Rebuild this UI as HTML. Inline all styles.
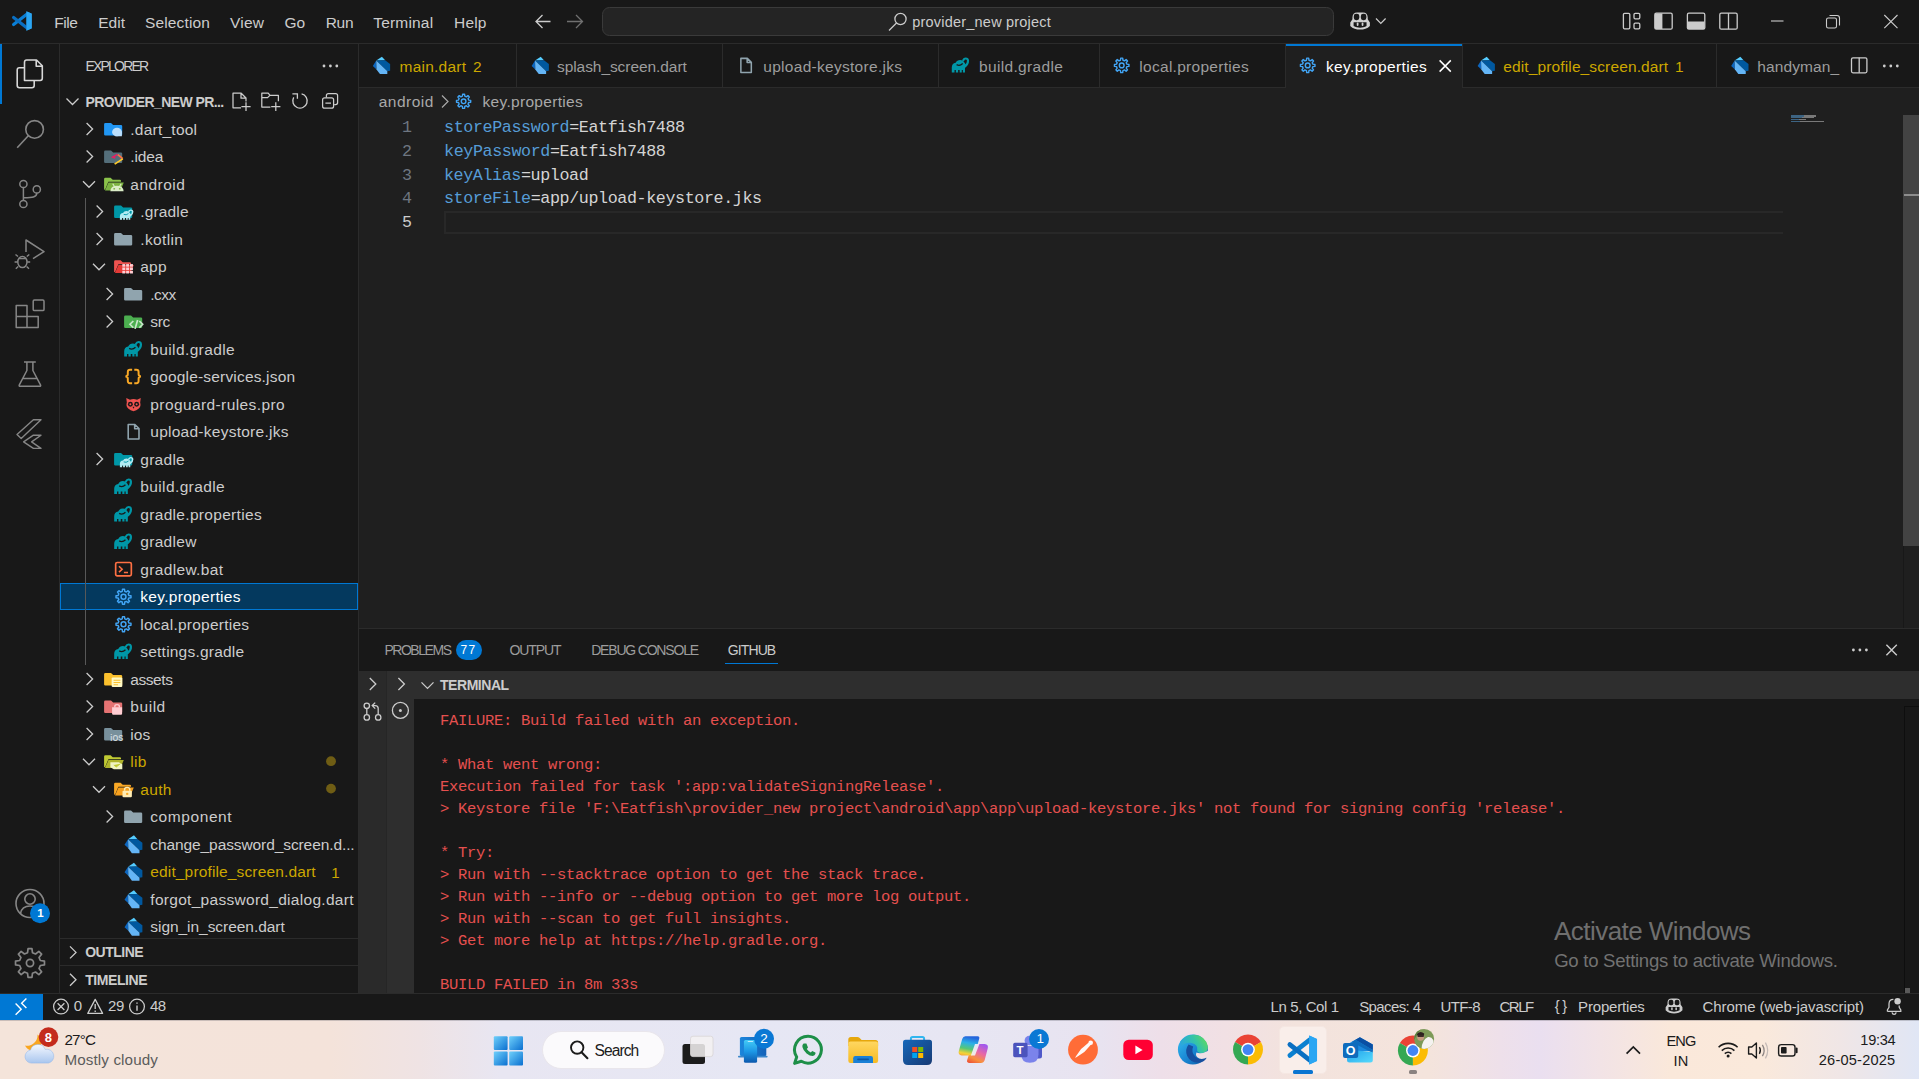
<!DOCTYPE html>
<html><head><meta charset="utf-8"><title>key.properties - provider_new project - Visual Studio Code</title>
<style>
html,body{margin:0;padding:0;background:#181818;}
body{width:1919px;height:1079px;position:relative;overflow:hidden;font-family:"Liberation Sans", sans-serif;}
#r div{position:absolute;box-sizing:border-box;}
#r span{position:absolute;white-space:pre;}
#r svg{position:absolute;left:0;top:0;}
#r span.m{font-family:"Liberation Mono", monospace;}
</style></head><body><div id="r">
<div style="left:0px;top:0px;width:1919px;height:1020px;background:#181818;"></div>
<div style="left:0px;top:43px;width:1919px;height:1px;background:#2b2b2b;"></div>
<div style="left:602px;top:7px;width:731.5px;height:28.5px;background:#242424;border:1px solid #3a3a3a;border-radius:7.5px;"></div>
<div style="left:59px;top:44px;width:1px;height:949px;background:#2b2b2b;"></div>
<div style="left:0px;top:44px;width:2px;height:60px;background:#0078d4;"></div>
<div style="left:358px;top:44px;width:1px;height:949px;background:#2b2b2b;"></div>
<div style="left:359px;top:44px;width:1560px;height:584px;background:#1f1f1f;"></div>
<div style="left:359px;top:44px;width:1560px;height:43px;background:#181818;"></div>
<div style="left:359px;top:87px;width:1560px;height:1px;background:#2b2b2b;"></div>
<div style="left:516px;top:44px;width:1px;height:43px;background:#2b2b2b;"></div>
<div style="left:722px;top:44px;width:1px;height:43px;background:#2b2b2b;"></div>
<div style="left:938px;top:44px;width:1px;height:43px;background:#2b2b2b;"></div>
<div style="left:1099px;top:44px;width:1px;height:43px;background:#2b2b2b;"></div>
<div style="left:1285px;top:44px;width:1px;height:43px;background:#2b2b2b;"></div>
<div style="left:1462px;top:44px;width:1px;height:43px;background:#2b2b2b;"></div>
<div style="left:1716px;top:44px;width:1px;height:43px;background:#2b2b2b;"></div>
<div style="left:1846px;top:44px;width:1px;height:43px;background:#2b2b2b;"></div>
<div style="left:1286px;top:44px;width:176px;height:44px;background:#1f1f1f;"></div>
<div style="left:1286px;top:44px;width:176px;height:1.5px;background:#0078d4;"></div>
<div style="left:1843px;top:44px;width:76px;height:43px;background:#181818;"></div>
<div style="left:444px;top:210.5px;width:1339px;height:23.75px;background:transparent;border:2px solid #282828;border-right:none;"></div>
<div style="left:1903px;top:115.25px;width:1px;height:512.75px;background:#181818;"></div>
<div style="left:1903px;top:115.25px;width:16px;height:431px;background:#434343;"></div>
<div style="left:1904px;top:194.2px;width:15px;height:2px;background:#8c8c8c;"></div>
<div style="left:359px;top:628px;width:1560px;height:1px;background:#2b2b2b;"></div>
<div style="left:359px;top:629px;width:1560px;height:364px;background:#181818;"></div>
<div style="left:359px;top:671px;width:27.5px;height:322px;background:#2a2a2a;"></div>
<div style="left:386.5px;top:671px;width:27.5px;height:322px;background:#2e2e2e;"></div>
<div style="left:386px;top:671px;width:1px;height:322px;background:#262626;"></div>
<div style="left:414px;top:671px;width:1505px;height:27.75px;background:#2e2e2e;"></div>
<div style="left:724.5px;top:662.8px;width:53.5px;height:1.25px;background:#0078d4;"></div>
<div style="left:456px;top:640px;width:26px;height:20px;background:#0078d4;border-radius:10px;"></div>
<div style="left:1904px;top:706px;width:1px;height:287px;background:#0e0e0e;"></div>
<div style="left:1905px;top:988px;width:5px;height:5px;background:#5a5a5a;"></div>
<div style="left:1904px;top:706px;width:15px;height:1px;background:#0e0e0e;"></div>
<div style="left:0px;top:993px;width:1919px;height:1px;background:#2b2b2b;"></div>
<div style="left:0px;top:994px;width:43px;height:26px;background:#0078d4;"></div>
<div style="left:60px;top:938px;width:298px;height:1px;background:#2b2b2b;"></div>
<div style="left:60px;top:965px;width:298px;height:1px;background:#2b2b2b;"></div>
<div style="left:60px;top:582.75px;width:298px;height:27.5px;background:#04395e;border:1px solid #0078d4;"></div>
<div style="left:85px;top:197.75px;width:1px;height:467.5px;background:#585858;"></div>
<div style="left:1790.8px;top:115.0px;width:13.0px;height:1.5px;background:rgba(86,156,214,0.55);"></div>
<div style="left:1803.8px;top:115.0px;width:12.0px;height:1.5px;background:rgba(212,212,212,0.5);"></div>
<div style="left:1790.8px;top:116.98px;width:11.0px;height:1.5px;background:rgba(86,156,214,0.55);"></div>
<div style="left:1801.8px;top:116.98px;width:12.0px;height:1.5px;background:rgba(212,212,212,0.5);"></div>
<div style="left:1790.8px;top:118.96px;width:8.0px;height:1.5px;background:rgba(86,156,214,0.55);"></div>
<div style="left:1798.8px;top:118.96px;width:7.0px;height:1.5px;background:rgba(212,212,212,0.5);"></div>
<div style="left:1790.8px;top:120.94px;width:9.0px;height:1.5px;background:rgba(86,156,214,0.55);"></div>
<div style="left:1799.8px;top:120.94px;width:24.0px;height:1.5px;background:rgba(212,212,212,0.5);"></div>
<div style="left:0px;top:1020px;width:1919px;height:59px;background:#f1e3dc;background:linear-gradient(90deg,#f4e4da 0px,#f4e3da 330px,#efe3e4 420px,#e8e6f2 500px,#e6e7f4 760px,#e7e6f3 960px,#e8e3f0 1100px,#eedfe9 1160px,#f1e0e4 1225px,#f3e3dd 1295px,#f4e4dc 1430px,#eee0ea 1500px,#eadff0 1540px,#f2e3e6 1600px,#fae8da 1670px,#fae9db 1760px,#f0e6e6 1840px,#e0e6f5 1919px);"></div>
<div style="left:0px;top:1020px;width:1919px;height:1px;background:rgba(90,90,100,0.28);"></div>
<div style="left:542px;top:1030.5px;width:123px;height:38.5px;background:#fbfafc;border-radius:19.25px;border:1px solid #e9e6ec;"></div>
<div style="left:1278.6px;top:1025.8px;width:48.6px;height:48.6px;background:#f9eeea;border-radius:5px;border:1px solid #f5e7e2;"></div>
<div style="left:1293.2px;top:1070.2px;width:19.4px;height:3.5px;background:#0a75d1;border-radius:1.6px;"></div>
<div style="left:1409px;top:1070.3px;width:8px;height:3.4px;background:#8a8280;border-radius:1.6px;"></div>
<svg width="1919" height="1079" viewBox="0 0 1919 1079" fill="none">
<g transform="translate(12.00,11.00) scale(1)" ><path d="M14.6 0.4 L19.6 2.6 V17.4 L14.6 19.6 Z" fill="#2aa5f4" /><path d="M14.8 3.2 L1.6 13.6" stroke="#0a7fd6" stroke-width="3.2" fill="none" stroke-linecap="round"/><path d="M14.8 16.8 L1.6 6.4" stroke="#0a6fc2" stroke-width="3.2" fill="none" stroke-linecap="round"/><path d="M14.4 0.3 L19.7 2.7 V17.3 L14.4 19.7 Z" fill="#2ba6f3" /></g>
<path d="M550.5 21.5H536 M542.5 15L536 21.5L542.5 28" stroke="#cccccc" stroke-width="1.3" fill="none" />
<path d="M567 21.5H582.5 M576 15L582.5 21.5L576 28" stroke="#707070" stroke-width="1.3" fill="none" />
<circle cx="900.5" cy="19" r="5.6" stroke="#cccccc" stroke-width="1.3"/><path d="M896.5 23L889 30.5" stroke="#cccccc" stroke-width="1.3" fill="none" />
<g transform="translate(1349.30,11.20) scale(0.98)" ><path d="M3.2 6.5C3.2 3 5 1.2 8 1.2H14C17 1.2 18.8 3 18.8 6.5V8.2L21 11.5V15C18.5 17.6 14.8 18.8 11 18.8C7.2 18.8 3.5 17.6 1 15V11.5L3.2 8.2Z" fill="#d0d0d0"/><rect x="4.6" y="2.6" width="5.6" height="6.6" rx="2.4" fill="#181818"/><rect x="11.8" y="2.6" width="5.6" height="6.6" rx="2.4" fill="#181818"/><path d="M4.4 11.2H17.6V15.2C15.6 16.3 13.4 16.8 11 16.8C8.6 16.8 6.4 16.3 4.4 15.2Z" fill="#181818"/><rect x="7.6" y="11.6" width="1.8" height="3.4" rx="0.9" fill="#d0d0d0"/><rect x="12.6" y="11.6" width="1.8" height="3.4" rx="0.9" fill="#d0d0d0"/></g>
<path d="M1376 18.5L1380.8 23.3L1385.6 18.5" stroke="#cccccc" stroke-width="1.2" fill="none" />
<rect x="1623.4" y="13.4" width="6.4" height="15.4" rx="1.2" stroke="#cccccc" stroke-width="1.3"/><rect x="1634" y="13.4" width="5.8" height="5.4" rx="1.2" stroke="#cccccc" stroke-width="1.3"/><rect x="1634" y="23.2" width="5.8" height="5.6" rx="1.2" stroke="#cccccc" stroke-width="1.3"/>
<rect x="1654.8" y="13.2" width="17.4" height="16" rx="1.5" stroke="#cccccc" stroke-width="1.3"/><rect x="1655" y="13.4" width="7.4" height="15.6" fill="#cccccc"/>
<rect x="1687.4" y="13.2" width="17.4" height="16" rx="1.5" stroke="#cccccc" stroke-width="1.3"/><rect x="1687.6" y="21.5" width="17" height="7.5" fill="#cccccc"/>
<rect x="1719.8" y="13.2" width="17.4" height="16" rx="1.5" stroke="#cccccc" stroke-width="1.3"/><path d="M1728.5 13.2V29.2" stroke="#cccccc" stroke-width="1.3" fill="none" />
<path d="M1771 21H1783.5" stroke="#cccccc" stroke-width="1.1" fill="none" />
<rect x="1826.5" y="18" width="10" height="10" rx="1.8" stroke="#cccccc" stroke-width="1.1"/><path d="M1829.5 15.5H1837Q1839.5 15.5 1839.5 18V25.5" stroke="#cccccc" stroke-width="1.1" fill="none" />
<path d="M1884.3 15L1897.5 28.2M1897.5 15L1884.3 28.2" stroke="#cccccc" stroke-width="1.1" fill="none" />
<path d="M24.5 80.5V62.2Q24.5 60 26.7 60H36.5L42.3 65.8V78.3Q42.3 80.5 40.1 80.5Z M36.2 60.2V66.2H42.2" stroke="#d7d7d7" stroke-width="1.6" fill="none" stroke-linejoin="round"/><path d="M24.3 67.8H19.4Q17.2 67.8 17.2 70V85.6Q17.2 87.8 19.4 87.8H32Q34.2 87.8 34.2 85.6V80.8" stroke="#d7d7d7" stroke-width="1.6" fill="none" />
<circle cx="34.6" cy="129.4" r="8.8" stroke="#868686" stroke-width="1.6"/><path d="M28.3 135.7L17.2 147.8" stroke="#868686" stroke-width="1.6" fill="none" />
<circle cx="23.4" cy="184" r="3.6" stroke="#868686" stroke-width="1.5"/><circle cx="23.4" cy="204" r="3.6" stroke="#868686" stroke-width="1.5"/><circle cx="36.8" cy="189.4" r="3.6" stroke="#868686" stroke-width="1.5"/><path d="M23.4 187.6V200.4 M36.8 193C36.8 197.5 32 197.6 23.6 197.8" stroke="#868686" stroke-width="1.5" fill="none" />
<path d="M26 252V240L44 251.6L33 258.6" stroke="#868686" stroke-width="1.5" fill="none" stroke-linejoin="round"/><ellipse cx="22.4" cy="262" rx="4.6" ry="5.6" stroke="#868686" stroke-width="1.5"/><path d="M18 256.5L15.5 254.5 M26.8 256.5L29.3 254.5 M17.6 262H14.6 M27.2 262H30.2 M18.2 266.5L15.8 268.8 M26.6 266.5L29 268.8 M19 258.6H25.8" stroke="#868686" stroke-width="1.4" fill="none" />
<path d="M16.2 305.5H27V316.6H38.2V327.4H16.2Z M16.2 316.6H27V327.4" stroke="#868686" stroke-width="1.5" fill="none" stroke-linejoin="round"/><rect x="33.2" y="300" width="10.8" height="10.6" rx="1.2" stroke="#868686" stroke-width="1.5"/>
<path d="M24 362H35.8 M26.9 362V370.5L19.2 385.2Q18.9 386.2 20 386.2H39.8Q40.9 386.2 40.6 385.2L32.9 370.5V362 M22.6 378.6H37.2" stroke="#868686" stroke-width="1.5" fill="none" stroke-linejoin="round"/>
<path d="M33.4 419.8H41L21.2 438.6L17 434.6Z M33.4 435.2H41L31.6 441.9L41 448.4H33.4L23.6 441.9Z" stroke="#868686" stroke-width="1.4" fill="none" stroke-linejoin="round"/>
<circle cx="30" cy="903.5" r="14" stroke="#868686" stroke-width="1.6"/><circle cx="30" cy="899" r="5.2" stroke="#868686" stroke-width="1.6"/><path d="M20.5 913.5C21.5 908 25 906 30 906C35 906 38.5 908 39.5 913.5" stroke="#868686" stroke-width="1.6" fill="none" />
<circle cx="40" cy="913.2" r="10" fill="#0078d4"/>
<path d="M40.31 960.53L44.47 961.06L44.47 964.94L40.31 965.47L39.04 968.54L41.61 971.86L38.86 974.61L35.54 972.04L32.47 973.31L31.94 977.47L28.06 977.47L27.53 973.31L24.46 972.04L21.14 974.61L18.39 971.86L20.96 968.54L19.69 965.47L15.53 964.94L15.53 961.06L19.69 960.53L20.96 957.46L18.39 954.14L21.14 951.39L24.46 953.96L27.53 952.69L28.06 948.53L31.94 948.53L32.47 952.69L35.54 953.96L38.86 951.39L41.61 954.14L39.04 957.46Z" stroke="#868686" stroke-width="1.7" stroke-linejoin="round" fill="none"/><circle cx="30" cy="963" r="3.6" stroke="#868686" stroke-width="1.7"/>
<circle cx="324" cy="66" r="1.4" fill="#cccccc"/><circle cx="330.4" cy="66" r="1.4" fill="#cccccc"/><circle cx="336.8" cy="66" r="1.4" fill="#cccccc"/>
<path d="M66.50 98.50L72.50 104.50L78.50 98.50" stroke="#cccccc" stroke-width="1.3" fill="none" />
<path d="M241 107.8H233V93.2H241.2L246 98V101.5 M241 93.4V98.2H245.8" stroke="#cccccc" stroke-width="1.25" fill="none" stroke-linejoin="round"/><path d="M241.4 106.6H250.6 M246 102.2V111" stroke="#cccccc" stroke-width="1.25" fill="none" />
<path d="M270.4 107H261.8V93.2H268.2L270 95.4H278.4V101.2 M261.8 97.6H267.6L269.6 95.6" stroke="#cccccc" stroke-width="1.25" fill="none" stroke-linejoin="round"/><path d="M271.2 106.6H280.4 M275.8 102.2V111" stroke="#cccccc" stroke-width="1.25" fill="none" />
<path d="M301.6 93.9A7.2 7.2 0 1 1 293.7 97.4" stroke="#cccccc" stroke-width="1.3" fill="none" /><path d="M292.4 93.9H297.4V98.7" stroke="#cccccc" stroke-width="1.3" fill="none" />
<rect x="322.6" y="97.8" width="11" height="10.4" rx="2" stroke="#cccccc" stroke-width="1.25"/><path d="M326.4 97.4V95.6Q326.4 93.7 328.4 93.7H335.6Q337.6 93.7 337.6 95.6V102.6Q337.6 104.6 335.6 104.6H334.2 M325.4 103H331" stroke="#cccccc" stroke-width="1.25" fill="none" />
<path d="M70.00 946.40L76.00 952.40L70.00 958.40" stroke="#cccccc" stroke-width="1.3" fill="none" />
<path d="M70.00 973.70L76.00 979.70L70.00 985.70" stroke="#cccccc" stroke-width="1.3" fill="none" />
<circle cx="331" cy="761.2" r="4.9" fill="#6f5d14"/><circle cx="331" cy="788.6" r="4.9" fill="#6f5d14"/>
<g transform="translate(102.50,120.00) scale(1.065,0.94)" ><path d="M1.5 4.4Q1.5 3.2 2.7 3.2H8L10 5.2H17.3Q18.5 5.2 18.5 6.4V15.4Q18.5 16.6 17.3 16.6H2.7Q1.5 16.6 1.5 15.4Z" fill="#2196f3" /><circle cx="13.6" cy="12.8" r="4.6" fill="#bbdefb"/><path d="M9.4 13L13.6 8.2L18.2 12.6V17.4H12Z" fill="#bbdefb" /></g>
<path d="M86.60 123.00L92.60 129.00L86.60 135.00" stroke="#cccccc" stroke-width="1.3" fill="none" />
<g transform="translate(102.50,147.50) scale(1.065,0.94)" ><path d="M1.5 4.4Q1.5 3.2 2.7 3.2H8L10 5.2H17.3Q18.5 5.2 18.5 6.4V15.4Q18.5 16.6 17.3 16.6H2.7Q1.5 16.6 1.5 15.4Z" fill="#546e7a" /><path d="M14 7.4L9.6 10.2L12 11.2" stroke="#e91e63" stroke-width="1.6" fill="none" /><path d="M14.4 7.6L19 11.8" stroke="#ff7043" stroke-width="1.6" fill="none" /><path d="M19 12L11.4 17.6" stroke="#ffca28" stroke-width="1.6" fill="none" /></g>
<path d="M86.60 150.50L92.60 156.50L86.60 162.50" stroke="#cccccc" stroke-width="1.3" fill="none" />
<g transform="translate(102.50,175.00) scale(1.065,0.94)" ><path d="M1.5 15.5V4.2Q1.5 3 2.7 3H7.6L9.6 5H16.2Q17.4 5 17.4 6.2V7.2H5.5L2.4 15.8Z" fill="#8bc34a" /><path d="M5.6 8H20L16.8 16.6H2.3Z" fill="#7cb342" /><path d="M7.4 17.4Q7.4 11.4 13.6 11.4Q19.8 11.4 19.8 17.4Z" fill="#dcedc8" /><path d="M9.6 9.4L11 11.8 M17.6 9.4L16.2 11.8" stroke="#dcedc8" stroke-width="1.1" fill="none" /><circle cx="11" cy="14.6" r="0.9" fill="#7cb342"/><circle cx="16.2" cy="14.6" r="0.9" fill="#7cb342"/></g>
<path d="M83.00 181.30L89.00 187.30L95.00 181.30" stroke="#cccccc" stroke-width="1.3" fill="none" />
<g transform="translate(112.50,202.50) scale(1.065,0.94)" ><path d="M1.5 4.4Q1.5 3.2 2.7 3.2H8L10 5.2H17.3Q18.5 5.2 18.5 6.4V15.4Q18.5 16.6 17.3 16.6H2.7Q1.5 16.6 1.5 15.4Z" fill="#0097a7" /><g transform="translate(6.6,6.2) scale(0.7)"><path d="M0.5 17.5V12.2Q0.5 7.8 4.6 7.2Q6 4.2 9.4 4.2Q12.4 4.2 13.6 6.6L15.4 9.4Q15.2 11 14.4 12.4V17.5H12.2V14.8H11V17.5H8.8V14.8H7.2V17.5H4.8V14.8H3.4V17.5Z" fill="#b2ebf2" /><path d="M14.2 11.4Q17.8 8.6 17.6 5Q17.4 2.7 15.2 2.7Q13.4 2.7 12.6 4.6" stroke="#b2ebf2" stroke-width="2.2" fill="none" stroke-linecap="round"/><path d="M5.6 9.2Q9 11 12 8" stroke="#0097a7" stroke-width="1.3" fill="none" /></g></g>
<path d="M96.60 205.50L102.60 211.50L96.60 217.50" stroke="#cccccc" stroke-width="1.3" fill="none" />
<g transform="translate(112.50,230.00) scale(1.065,0.94)" ><path d="M1.5 4.4Q1.5 3.2 2.7 3.2H8L10 5.2H17.3Q18.5 5.2 18.5 6.4V15.4Q18.5 16.6 17.3 16.6H2.7Q1.5 16.6 1.5 15.4Z" fill="#90a4ae" /></g>
<path d="M96.60 233.00L102.60 239.00L96.60 245.00" stroke="#cccccc" stroke-width="1.3" fill="none" />
<g transform="translate(112.50,257.50) scale(1.065,0.94)" ><path d="M1.5 15.5V4.2Q1.5 3 2.7 3H7.6L9.6 5H16.2Q17.4 5 17.4 6.2V7.2H5.5L2.4 15.8Z" fill="#ef5350" /><path d="M5.6 8H20L16.8 16.6H2.3Z" fill="#e53935" /><rect x="9.2" y="7.0" width="2.8" height="2.8" fill="#ffcdd2"/><rect x="9.2" y="10.6" width="2.8" height="2.8" fill="#ffcdd2"/><rect x="9.2" y="14.2" width="2.8" height="2.8" fill="#ffcdd2"/><rect x="12.8" y="7.0" width="2.8" height="2.8" fill="#ffcdd2"/><rect x="12.8" y="10.6" width="2.8" height="2.8" fill="#ffcdd2"/><rect x="12.8" y="14.2" width="2.8" height="2.8" fill="#ffcdd2"/><rect x="16.4" y="7.0" width="2.8" height="2.8" fill="#ffcdd2"/><rect x="16.4" y="10.6" width="2.8" height="2.8" fill="#ffcdd2"/><rect x="16.4" y="14.2" width="2.8" height="2.8" fill="#ffcdd2"/></g>
<path d="M93.00 263.80L99.00 269.80L105.00 263.80" stroke="#cccccc" stroke-width="1.3" fill="none" />
<g transform="translate(122.50,285.00) scale(1.065,0.94)" ><path d="M1.5 4.4Q1.5 3.2 2.7 3.2H8L10 5.2H17.3Q18.5 5.2 18.5 6.4V15.4Q18.5 16.6 17.3 16.6H2.7Q1.5 16.6 1.5 15.4Z" fill="#90a4ae" /></g>
<path d="M106.60 288.00L112.60 294.00L106.60 300.00" stroke="#cccccc" stroke-width="1.3" fill="none" />
<g transform="translate(122.50,312.50) scale(1.065,0.94)" ><path d="M1.5 4.4Q1.5 3.2 2.7 3.2H8L10 5.2H17.3Q18.5 5.2 18.5 6.4V15.4Q18.5 16.6 17.3 16.6H2.7Q1.5 16.6 1.5 15.4Z" fill="#4caf50" /><path d="M10.2 9L7 12.6L10.2 16.2 M15.8 9L19 12.6L15.8 16.2 M14.2 8L11.8 17.4" stroke="#c8e6c9" stroke-width="1.6" fill="none" /></g>
<path d="M106.60 315.50L112.60 321.50L106.60 327.50" stroke="#cccccc" stroke-width="1.3" fill="none" />
<g transform="translate(123.70,339.40) scale(0.98)" ><path d="M0.5 17.5V12.2Q0.5 7.8 4.6 7.2Q6 4.2 9.4 4.2Q12.4 4.2 13.6 6.6L15.4 9.4Q15.2 11 14.4 12.4V17.5H12.2V14.8H11V17.5H8.8V14.8H7.2V17.5H4.8V14.8H3.4V17.5Z" fill="#0097a7" /><path d="M14.2 11.4Q17.8 8.6 17.6 5Q17.4 2.7 15.2 2.7Q13.4 2.7 12.6 4.6" stroke="#0097a7" stroke-width="2.2" fill="none" stroke-linecap="round"/><path d="M5.6 9.2Q9 11 12 8" stroke="#181818" stroke-width="1.3" fill="none" /></g>
<g transform="translate(123.70,366.90) scale(0.98)" ><path d="M8.6 3H6.4Q4.2 3 4.2 5.2V7.6Q4.2 9.6 1.8 9.8Q4.2 10 4.2 12V14.4Q4.2 16.6 6.4 16.6H8.6 M10.8 3H13Q15.2 3 15.2 5.2V7.6Q15.2 9.6 17.6 9.8Q15.2 10 15.2 12V14.4Q15.2 16.6 13 16.6H10.8" stroke="#f9a825" stroke-width="2" fill="none" /></g>
<g transform="translate(123.70,394.40) scale(0.98)" ><path d="M2.6 3.6L6.4 5.4Q10 4.2 13.6 5.4L17.4 3.6L16.8 8.2Q18 12 15.4 14.4Q13 16.8 10 17.2Q7 16.8 4.6 14.4Q2 12 3.2 8.2Z" fill="#ef5350" /><circle cx="6.8" cy="10" r="2.5" fill="#181818"/><circle cx="13.2" cy="10" r="2.5" fill="#181818"/><circle cx="6.8" cy="10" r="1" fill="#ef5350"/><circle cx="13.2" cy="10" r="1" fill="#ef5350"/><path d="M9 12.6H11L10 14.6Z" fill="#181818" /></g>
<g transform="translate(123.70,421.90) scale(0.98)" ><path d="M4.6 17.4V2.6H11.4L15.6 6.8V17.4Z M11.2 2.8V7H15.4" stroke="#90a4ae" stroke-width="1.6" fill="none" stroke-linejoin="round"/></g>
<g transform="translate(112.50,450.00) scale(1.065,0.94)" ><path d="M1.5 4.4Q1.5 3.2 2.7 3.2H8L10 5.2H17.3Q18.5 5.2 18.5 6.4V15.4Q18.5 16.6 17.3 16.6H2.7Q1.5 16.6 1.5 15.4Z" fill="#0097a7" /><g transform="translate(6.6,6.2) scale(0.7)"><path d="M0.5 17.5V12.2Q0.5 7.8 4.6 7.2Q6 4.2 9.4 4.2Q12.4 4.2 13.6 6.6L15.4 9.4Q15.2 11 14.4 12.4V17.5H12.2V14.8H11V17.5H8.8V14.8H7.2V17.5H4.8V14.8H3.4V17.5Z" fill="#b2ebf2" /><path d="M14.2 11.4Q17.8 8.6 17.6 5Q17.4 2.7 15.2 2.7Q13.4 2.7 12.6 4.6" stroke="#b2ebf2" stroke-width="2.2" fill="none" stroke-linecap="round"/><path d="M5.6 9.2Q9 11 12 8" stroke="#0097a7" stroke-width="1.3" fill="none" /></g></g>
<path d="M96.60 453.00L102.60 459.00L96.60 465.00" stroke="#cccccc" stroke-width="1.3" fill="none" />
<g transform="translate(113.70,476.90) scale(0.98)" ><path d="M0.5 17.5V12.2Q0.5 7.8 4.6 7.2Q6 4.2 9.4 4.2Q12.4 4.2 13.6 6.6L15.4 9.4Q15.2 11 14.4 12.4V17.5H12.2V14.8H11V17.5H8.8V14.8H7.2V17.5H4.8V14.8H3.4V17.5Z" fill="#0097a7" /><path d="M14.2 11.4Q17.8 8.6 17.6 5Q17.4 2.7 15.2 2.7Q13.4 2.7 12.6 4.6" stroke="#0097a7" stroke-width="2.2" fill="none" stroke-linecap="round"/><path d="M5.6 9.2Q9 11 12 8" stroke="#181818" stroke-width="1.3" fill="none" /></g>
<g transform="translate(113.70,504.40) scale(0.98)" ><path d="M0.5 17.5V12.2Q0.5 7.8 4.6 7.2Q6 4.2 9.4 4.2Q12.4 4.2 13.6 6.6L15.4 9.4Q15.2 11 14.4 12.4V17.5H12.2V14.8H11V17.5H8.8V14.8H7.2V17.5H4.8V14.8H3.4V17.5Z" fill="#0097a7" /><path d="M14.2 11.4Q17.8 8.6 17.6 5Q17.4 2.7 15.2 2.7Q13.4 2.7 12.6 4.6" stroke="#0097a7" stroke-width="2.2" fill="none" stroke-linecap="round"/><path d="M5.6 9.2Q9 11 12 8" stroke="#181818" stroke-width="1.3" fill="none" /></g>
<g transform="translate(113.70,531.90) scale(0.98)" ><path d="M0.5 17.5V12.2Q0.5 7.8 4.6 7.2Q6 4.2 9.4 4.2Q12.4 4.2 13.6 6.6L15.4 9.4Q15.2 11 14.4 12.4V17.5H12.2V14.8H11V17.5H8.8V14.8H7.2V17.5H4.8V14.8H3.4V17.5Z" fill="#0097a7" /><path d="M14.2 11.4Q17.8 8.6 17.6 5Q17.4 2.7 15.2 2.7Q13.4 2.7 12.6 4.6" stroke="#0097a7" stroke-width="2.2" fill="none" stroke-linecap="round"/><path d="M5.6 9.2Q9 11 12 8" stroke="#181818" stroke-width="1.3" fill="none" /></g>
<g transform="translate(113.70,559.40) scale(0.98)" ><rect x="2" y="3.2" width="16" height="13.6" rx="1.6" stroke="#ff7043" stroke-width="1.7"/><path d="M5.4 7L8.6 10L5.4 13 M10.4 13.4H14.6" stroke="#ff7043" stroke-width="1.6" fill="none" /></g>
<g transform="translate(113.70,586.90) scale(0.98)" ><path d="M15.45 8.69L17.63 8.97L17.63 11.03L15.45 11.31L14.77 12.93L16.12 14.67L14.67 16.12L12.93 14.77L11.31 15.45L11.03 17.63L8.97 17.63L8.69 15.45L7.07 14.77L5.33 16.12L3.88 14.67L5.23 12.93L4.55 11.31L2.37 11.03L2.37 8.97L4.55 8.69L5.23 7.07L3.88 5.33L5.33 3.88L7.07 5.23L8.69 4.55L8.97 2.37L11.03 2.37L11.31 4.55L12.93 5.23L14.67 3.88L16.12 5.33L14.77 7.07Z" stroke="#42a5f5" stroke-width="1.5" stroke-linejoin="round" fill="none"/><circle cx="10" cy="10" r="2.5" stroke="#42a5f5" stroke-width="1.5"/></g>
<g transform="translate(113.70,614.40) scale(0.98)" ><path d="M15.45 8.69L17.63 8.97L17.63 11.03L15.45 11.31L14.77 12.93L16.12 14.67L14.67 16.12L12.93 14.77L11.31 15.45L11.03 17.63L8.97 17.63L8.69 15.45L7.07 14.77L5.33 16.12L3.88 14.67L5.23 12.93L4.55 11.31L2.37 11.03L2.37 8.97L4.55 8.69L5.23 7.07L3.88 5.33L5.33 3.88L7.07 5.23L8.69 4.55L8.97 2.37L11.03 2.37L11.31 4.55L12.93 5.23L14.67 3.88L16.12 5.33L14.77 7.07Z" stroke="#42a5f5" stroke-width="1.5" stroke-linejoin="round" fill="none"/><circle cx="10" cy="10" r="2.5" stroke="#42a5f5" stroke-width="1.5"/></g>
<g transform="translate(113.70,641.90) scale(0.98)" ><path d="M0.5 17.5V12.2Q0.5 7.8 4.6 7.2Q6 4.2 9.4 4.2Q12.4 4.2 13.6 6.6L15.4 9.4Q15.2 11 14.4 12.4V17.5H12.2V14.8H11V17.5H8.8V14.8H7.2V17.5H4.8V14.8H3.4V17.5Z" fill="#0097a7" /><path d="M14.2 11.4Q17.8 8.6 17.6 5Q17.4 2.7 15.2 2.7Q13.4 2.7 12.6 4.6" stroke="#0097a7" stroke-width="2.2" fill="none" stroke-linecap="round"/><path d="M5.6 9.2Q9 11 12 8" stroke="#181818" stroke-width="1.3" fill="none" /></g>
<g transform="translate(102.50,670.00) scale(1.065,0.94)" ><path d="M1.5 4.4Q1.5 3.2 2.7 3.2H8L10 5.2H17.3Q18.5 5.2 18.5 6.4V15.4Q18.5 16.6 17.3 16.6H2.7Q1.5 16.6 1.5 15.4Z" fill="#fbc02d" /><rect x="8.6" y="8" width="10" height="10" rx="1" fill="#fff9c4"/><path d="M10.4 11H16.8 M10.4 13.4H16.8 M10.4 15.8H14.6" stroke="#fbc02d" stroke-width="1.1" fill="none" /></g>
<path d="M86.60 673.00L92.60 679.00L86.60 685.00" stroke="#cccccc" stroke-width="1.3" fill="none" />
<g transform="translate(102.50,697.50) scale(1.065,0.94)" ><path d="M1.5 4.4Q1.5 3.2 2.7 3.2H8L10 5.2H17.3Q18.5 5.2 18.5 6.4V15.4Q18.5 16.6 17.3 16.6H2.7Q1.5 16.6 1.5 15.4Z" fill="#e57373" /><path d="M9 10.4H18.4V17.4Q18.4 18.4 17.4 18.4H10Q9 18.4 9 17.4Z" fill="#ffcdd2" /><path d="M11.6 10.6V9.4Q11.6 7.6 13.7 7.6Q15.8 7.6 15.8 9.4V10.6" stroke="#ffcdd2" stroke-width="1.3" fill="none" /></g>
<path d="M86.60 700.50L92.60 706.50L86.60 712.50" stroke="#cccccc" stroke-width="1.3" fill="none" />
<g transform="translate(102.50,725.00) scale(1.065,0.94)" ><path d="M1.5 4.4Q1.5 3.2 2.7 3.2H8L10 5.2H17.3Q18.5 5.2 18.5 6.4V15.4Q18.5 16.6 17.3 16.6H2.7Q1.5 16.6 1.5 15.4Z" fill="#78909c" /><text x="7.4" y="17.2" font-family="Liberation Sans, sans-serif" font-size="9.5" font-weight="700" fill="#cfd8dc" textLength="12" lengthAdjust="spacingAndGlyphs">iOS</text></g>
<path d="M86.60 728.00L92.60 734.00L86.60 740.00" stroke="#cccccc" stroke-width="1.3" fill="none" />
<g transform="translate(102.50,752.50) scale(1.065,0.94)" ><path d="M1.5 15.5V4.2Q1.5 3 2.7 3H7.6L9.6 5H16.2Q17.4 5 17.4 6.2V7.2H5.5L2.4 15.8Z" fill="#c0ca33" /><path d="M5.6 8H20L16.8 16.6H2.3Z" fill="#afb42b" /><path d="M7.4 10.4H15.4L18.6 12.6V17.8H10.6L7.4 15.6Z" fill="#f0f4c3" /><path d="M10.6 13.4L13 15.4L16.8 12" fill="#c0ca33" stroke="#c0ca33" stroke-width="0.8"/></g>
<path d="M83.00 758.80L89.00 764.80L95.00 758.80" stroke="#cccccc" stroke-width="1.3" fill="none" />
<g transform="translate(112.50,780.00) scale(1.065,0.94)" ><path d="M1.5 15.5V4.2Q1.5 3 2.7 3H7.6L9.6 5H16.2Q17.4 5 17.4 6.2V7.2H5.5L2.4 15.8Z" fill="#f9a825" /><path d="M5.6 8H20L16.8 16.6H2.3Z" fill="#f59f1d" /><rect x="9.4" y="11.4" width="8.8" height="7" rx="1" fill="#ffecb3"/><path d="M11.4 11.4V9.8Q11.4 7.8 13.8 7.8Q16.2 7.8 16.2 9.8V11.4" stroke="#ffecb3" stroke-width="1.4" fill="none" /><circle cx="13.8" cy="14.8" r="1.2" fill="#f9a825"/></g>
<path d="M93.00 786.30L99.00 792.30L105.00 786.30" stroke="#cccccc" stroke-width="1.3" fill="none" />
<g transform="translate(122.50,807.50) scale(1.065,0.94)" ><path d="M1.5 4.4Q1.5 3.2 2.7 3.2H8L10 5.2H17.3Q18.5 5.2 18.5 6.4V15.4Q18.5 16.6 17.3 16.6H2.7Q1.5 16.6 1.5 15.4Z" fill="#90a4ae" /></g>
<path d="M106.60 810.50L112.60 816.50L106.60 822.50" stroke="#cccccc" stroke-width="1.3" fill="none" />
<g transform="translate(123.70,834.40) scale(0.98)" ><path d="M0.85 10.55L4.45 4.85L4.75 14.25Z" fill="#0d66bf" /><path d="M10.45 0.85L13.85 4.65L4.45 4.85Z" fill="#55ccff" /><path d="M4.45 4.85L13.85 4.65L19.05 8.55L19.05 15.75L16.15 16.05Z" fill="#00589f" /><path d="M4.45 4.85L16.15 16.05L16.15 19.15L8.35 19.15L4.75 14.25Z" fill="#64b5f6" /></g>
<g transform="translate(123.70,861.90) scale(0.98)" ><path d="M0.85 10.55L4.45 4.85L4.75 14.25Z" fill="#0d66bf" /><path d="M10.45 0.85L13.85 4.65L4.45 4.85Z" fill="#55ccff" /><path d="M4.45 4.85L13.85 4.65L19.05 8.55L19.05 15.75L16.15 16.05Z" fill="#00589f" /><path d="M4.45 4.85L16.15 16.05L16.15 19.15L8.35 19.15L4.75 14.25Z" fill="#64b5f6" /></g>
<g transform="translate(123.70,889.40) scale(0.98)" ><path d="M0.85 10.55L4.45 4.85L4.75 14.25Z" fill="#0d66bf" /><path d="M10.45 0.85L13.85 4.65L4.45 4.85Z" fill="#55ccff" /><path d="M4.45 4.85L13.85 4.65L19.05 8.55L19.05 15.75L16.15 16.05Z" fill="#00589f" /><path d="M4.45 4.85L16.15 16.05L16.15 19.15L8.35 19.15L4.75 14.25Z" fill="#64b5f6" /></g>
<g transform="translate(123.70,916.90) scale(0.98)" ><path d="M0.85 10.55L4.45 4.85L4.75 14.25Z" fill="#0d66bf" /><path d="M10.45 0.85L13.85 4.65L4.45 4.85Z" fill="#55ccff" /><path d="M4.45 4.85L13.85 4.65L19.05 8.55L19.05 15.75L16.15 16.05Z" fill="#00589f" /><path d="M4.45 4.85L16.15 16.05L16.15 19.15L8.35 19.15L4.75 14.25Z" fill="#64b5f6" /></g>
<g transform="translate(372.00,55.90) scale(0.95)" ><path d="M0.85 10.55L4.45 4.85L4.75 14.25Z" fill="#0d66bf" /><path d="M10.45 0.85L13.85 4.65L4.45 4.85Z" fill="#55ccff" /><path d="M4.45 4.85L13.85 4.65L19.05 8.55L19.05 15.75L16.15 16.05Z" fill="#00589f" /><path d="M4.45 4.85L16.15 16.05L16.15 19.15L8.35 19.15L4.75 14.25Z" fill="#64b5f6" /></g>
<g transform="translate(530.80,55.90) scale(0.95)" ><path d="M0.85 10.55L4.45 4.85L4.75 14.25Z" fill="#0d66bf" /><path d="M10.45 0.85L13.85 4.65L4.45 4.85Z" fill="#55ccff" /><path d="M4.45 4.85L13.85 4.65L19.05 8.55L19.05 15.75L16.15 16.05Z" fill="#00589f" /><path d="M4.45 4.85L16.15 16.05L16.15 19.15L8.35 19.15L4.75 14.25Z" fill="#64b5f6" /></g>
<g transform="translate(736.50,55.90) scale(0.95)" ><path d="M4.6 17.4V2.6H11.4L15.6 6.8V17.4Z M11.2 2.8V7H15.4" stroke="#90a4ae" stroke-width="1.6" fill="none" stroke-linejoin="round"/></g>
<g transform="translate(951.30,55.90) scale(0.95)" ><path d="M0.5 17.5V12.2Q0.5 7.8 4.6 7.2Q6 4.2 9.4 4.2Q12.4 4.2 13.6 6.6L15.4 9.4Q15.2 11 14.4 12.4V17.5H12.2V14.8H11V17.5H8.8V14.8H7.2V17.5H4.8V14.8H3.4V17.5Z" fill="#0097a7" /><path d="M14.2 11.4Q17.8 8.6 17.6 5Q17.4 2.7 15.2 2.7Q13.4 2.7 12.6 4.6" stroke="#0097a7" stroke-width="2.2" fill="none" stroke-linecap="round"/><path d="M5.6 9.2Q9 11 12 8" stroke="#181818" stroke-width="1.3" fill="none" /></g>
<g transform="translate(1112.20,55.90) scale(0.95)" ><path d="M15.45 8.69L17.63 8.97L17.63 11.03L15.45 11.31L14.77 12.93L16.12 14.67L14.67 16.12L12.93 14.77L11.31 15.45L11.03 17.63L8.97 17.63L8.69 15.45L7.07 14.77L5.33 16.12L3.88 14.67L5.23 12.93L4.55 11.31L2.37 11.03L2.37 8.97L4.55 8.69L5.23 7.07L3.88 5.33L5.33 3.88L7.07 5.23L8.69 4.55L8.97 2.37L11.03 2.37L11.31 4.55L12.93 5.23L14.67 3.88L16.12 5.33L14.77 7.07Z" stroke="#42a5f5" stroke-width="1.5" stroke-linejoin="round" fill="none"/><circle cx="10" cy="10" r="2.5" stroke="#42a5f5" stroke-width="1.5"/></g>
<g transform="translate(1298.20,55.90) scale(0.95)" ><path d="M15.45 8.69L17.63 8.97L17.63 11.03L15.45 11.31L14.77 12.93L16.12 14.67L14.67 16.12L12.93 14.77L11.31 15.45L11.03 17.63L8.97 17.63L8.69 15.45L7.07 14.77L5.33 16.12L3.88 14.67L5.23 12.93L4.55 11.31L2.37 11.03L2.37 8.97L4.55 8.69L5.23 7.07L3.88 5.33L5.33 3.88L7.07 5.23L8.69 4.55L8.97 2.37L11.03 2.37L11.31 4.55L12.93 5.23L14.67 3.88L16.12 5.33L14.77 7.07Z" stroke="#42a5f5" stroke-width="1.5" stroke-linejoin="round" fill="none"/><circle cx="10" cy="10" r="2.5" stroke="#42a5f5" stroke-width="1.5"/></g>
<g transform="translate(1476.80,55.90) scale(0.95)" ><path d="M0.85 10.55L4.45 4.85L4.75 14.25Z" fill="#0d66bf" /><path d="M10.45 0.85L13.85 4.65L4.45 4.85Z" fill="#55ccff" /><path d="M4.45 4.85L13.85 4.65L19.05 8.55L19.05 15.75L16.15 16.05Z" fill="#00589f" /><path d="M4.45 4.85L16.15 16.05L16.15 19.15L8.35 19.15L4.75 14.25Z" fill="#64b5f6" /></g>
<g transform="translate(1730.40,55.90) scale(0.95)" ><path d="M0.85 10.55L4.45 4.85L4.75 14.25Z" fill="#0d66bf" /><path d="M10.45 0.85L13.85 4.65L4.45 4.85Z" fill="#55ccff" /><path d="M4.45 4.85L13.85 4.65L19.05 8.55L19.05 15.75L16.15 16.05Z" fill="#00589f" /><path d="M4.45 4.85L16.15 16.05L16.15 19.15L8.35 19.15L4.75 14.25Z" fill="#64b5f6" /></g>
<path d="M1439.6 60.4L1450.8 71.6M1450.8 60.4L1439.6 71.6" stroke="#ffffff" stroke-width="1.5" fill="none" />
<rect x="1851.5" y="57.8" width="15.4" height="15" rx="1.5" stroke="#cccccc" stroke-width="1.3"/><path d="M1859.2 57.8V72.8" stroke="#cccccc" stroke-width="1.3" fill="none" />
<circle cx="1884.3" cy="66" r="1.4" fill="#cccccc"/><circle cx="1890.8" cy="66" r="1.4" fill="#cccccc"/><circle cx="1897.3" cy="66" r="1.4" fill="#cccccc"/>
<path d="M442.00 95.50L448.00 101.50L442.00 107.50" stroke="#a9a9a9" stroke-width="1.2" fill="none" />
<g transform="translate(454.30,92.00) scale(0.93)" ><path d="M15.45 8.69L17.63 8.97L17.63 11.03L15.45 11.31L14.77 12.93L16.12 14.67L14.67 16.12L12.93 14.77L11.31 15.45L11.03 17.63L8.97 17.63L8.69 15.45L7.07 14.77L5.33 16.12L3.88 14.67L5.23 12.93L4.55 11.31L2.37 11.03L2.37 8.97L4.55 8.69L5.23 7.07L3.88 5.33L5.33 3.88L7.07 5.23L8.69 4.55L8.97 2.37L11.03 2.37L11.31 4.55L12.93 5.23L14.67 3.88L16.12 5.33L14.77 7.07Z" stroke="#42a5f5" stroke-width="1.5" stroke-linejoin="round" fill="none"/><circle cx="10" cy="10" r="2.5" stroke="#42a5f5" stroke-width="1.5"/></g>
<path d="M369.80 678.00L375.80 684.00L369.80 690.00" stroke="#cccccc" stroke-width="1.3" fill="none" />
<path d="M398.40 678.00L404.40 684.00L398.40 690.00" stroke="#cccccc" stroke-width="1.3" fill="none" />
<path d="M421.50 682.40L427.50 688.40L433.50 682.40" stroke="#cccccc" stroke-width="1.3" fill="none" />
<circle cx="366.8" cy="705.8" r="2.7" stroke="#cccccc" stroke-width="1.3"/><circle cx="366.8" cy="717.4" r="2.7" stroke="#cccccc" stroke-width="1.3"/><circle cx="378.2" cy="717.4" r="2.7" stroke="#cccccc" stroke-width="1.3"/><path d="M366.8 708.6V714.6 M378.2 714.6V708.6Q378.2 705.6 375.2 705.6H372.4 M375.2 702.6L372.2 705.6L375.2 708.6" stroke="#cccccc" stroke-width="1.3" fill="none" />
<circle cx="400.4" cy="710.4" r="8" stroke="#cccccc" stroke-width="1.3"/><circle cx="400.4" cy="710.4" r="1.5" fill="#cccccc"/>
<circle cx="1853.4" cy="650" r="1.4" fill="#cccccc"/><circle cx="1859.9" cy="650" r="1.4" fill="#cccccc"/><circle cx="1866.4" cy="650" r="1.4" fill="#cccccc"/>
<path d="M1886.4 644.8L1896.8 655.2M1896.8 644.8L1886.4 655.2" stroke="#cccccc" stroke-width="1.4" fill="none" />
<path d="M15.6 1003.6L21.2 1009.2L15.6 1014.8 M26.4 998.4L21.6 1003.2L26.4 1008" stroke="#ffffff" stroke-width="1.4" fill="none" />
<circle cx="61" cy="1006.6" r="7.4" stroke="#cccccc" stroke-width="1.25"/><path d="M57.6 1003.2L64.4 1010M64.4 1003.2L57.6 1010" stroke="#cccccc" stroke-width="1.25" fill="none" />
<path d="M95.2 999.4L102.6 1013.4H87.8Z" stroke="#cccccc" stroke-width="1.25" fill="none" stroke-linejoin="round"/><path d="M95.2 1004V1009 M95.2 1010.6V1011.9" stroke="#cccccc" stroke-width="1.3" fill="none" />
<circle cx="137" cy="1006.6" r="7.4" stroke="#cccccc" stroke-width="1.25"/><path d="M137 1005.6V1010.8 M137 1002.4V1003.8" stroke="#cccccc" stroke-width="1.4" fill="none" />
<g transform="translate(1664.80,997.60) scale(0.84)" ><path d="M3.2 6.5C3.2 3 5 1.2 8 1.2H14C17 1.2 18.8 3 18.8 6.5V8.2L21 11.5V15C18.5 17.6 14.8 18.8 11 18.8C7.2 18.8 3.5 17.6 1 15V11.5L3.2 8.2Z" fill="#cccccc"/><rect x="4.6" y="2.6" width="5.6" height="6.6" rx="2.4" fill="#181818"/><rect x="11.8" y="2.6" width="5.6" height="6.6" rx="2.4" fill="#181818"/><path d="M4.4 11.2H17.6V15.2C15.6 16.3 13.4 16.8 11 16.8C8.6 16.8 6.4 16.3 4.4 15.2Z" fill="#181818"/><rect x="7.6" y="11.6" width="1.8" height="3.4" rx="0.9" fill="#cccccc"/><rect x="12.6" y="11.6" width="1.8" height="3.4" rx="0.9" fill="#cccccc"/></g>
<path d="M1887.4 1011.4V1010L1889 1007.4V1004Q1889 999.4 1893.4 999.4 M1899.2 1005.6V1007.4L1900.8 1010V1011.4H1887.4 M1892 1012.4Q1892.4 1014.4 1894.1 1014.4Q1895.8 1014.4 1896.2 1012.4" stroke="#cccccc" stroke-width="1.25" fill="none" /><circle cx="1897.6" cy="1001.2" r="3.2" fill="#cccccc"/>
<defs><linearGradient id="gw" x1="0" y1="0" x2="1" y2="1"><stop offset="0" stop-color="#6fd0fb"/><stop offset="1" stop-color="#0a6fd0"/></linearGradient><linearGradient id="gcl" x1="0" y1="0" x2="0" y2="1"><stop offset="0" stop-color="#f4f8ff"/><stop offset="1" stop-color="#a9c6ee"/></linearGradient><linearGradient id="ged" x1="0" y1="0" x2="1" y2="1"><stop offset="0" stop-color="#35c1f1"/><stop offset="0.5" stop-color="#1b8ad6"/><stop offset="1" stop-color="#0c59a4"/></linearGradient><linearGradient id="gcp" x1="0" y1="0" x2="1" y2="1"><stop offset="0" stop-color="#2a86e8"/><stop offset="0.35" stop-color="#39c5b0"/><stop offset="0.55" stop-color="#f6c343"/><stop offset="0.75" stop-color="#f2604f"/><stop offset="1" stop-color="#b75ae6"/></linearGradient><linearGradient id="gol" x1="0" y1="0" x2="1" y2="1"><stop offset="0" stop-color="#35b8f1"/><stop offset="1" stop-color="#0f5fb8"/></linearGradient></defs>
<path d="M37.5 1034.4A8.7 8.7 0 1 1 25 1045.6A10.5 10.5 0 0 0 37.5 1034.4Z" fill="#f9a620"/>
<path d="M31.4 1063.1A6.5 6.5 0 0 1 30.4 1050.2A7.8 7.8 0 0 1 45.2 1049.4A6.9 6.9 0 0 1 48.4 1063.1Z" fill="url(#gcl)" stroke="#8fb4e8" stroke-width="0.5"/>
<circle cx="48.5" cy="1037.1" r="9.8" fill="#c42b1c"/>
<rect x="493.8" y="1036.3" width="13.8" height="13.8" rx="1" fill="url(#gw)"/>
<rect x="509.2" y="1036.3" width="13.8" height="13.8" rx="1" fill="url(#gw)"/>
<rect x="493.8" y="1051.6" width="13.8" height="13.8" rx="1" fill="url(#gw)"/>
<rect x="509.2" y="1051.6" width="13.8" height="13.8" rx="1" fill="url(#gw)"/>
<circle cx="577.2" cy="1047.6" r="6.2" stroke="#1b1b1b" stroke-width="1.9"/><path d="M581.8 1052.4L587.4 1058.2" stroke="#1b1b1b" stroke-width="2.1" stroke-linecap="round"/>
<rect x="682.5" y="1044" width="22.5" height="20" rx="2.5" fill="#1c1c1c"/><rect x="690.5" y="1036.2" width="22.5" height="20.4" rx="2.5" fill="#f3f1f1" fill-opacity="0.86" stroke="#d9d5d5" stroke-width="0.8"/>
<defs><linearGradient id="gph" x1="0" y1="0" x2="0" y2="1"><stop offset="0" stop-color="#45ccf6"/><stop offset="0.5" stop-color="#1c98e6"/><stop offset="1" stop-color="#0b58ad"/></linearGradient><linearGradient id="glp" x1="0" y1="0" x2="1" y2="0"><stop offset="0" stop-color="#1b86dc"/><stop offset="1" stop-color="#1462b8"/></linearGradient><linearGradient id="gfe" x1="0" y1="0" x2="0" y2="1"><stop offset="0" stop-color="#ffd761"/><stop offset="1" stop-color="#f6ba22"/></linearGradient><linearGradient id="gst" x1="0" y1="0" x2="1" y2="1"><stop offset="0" stop-color="#1668ba"/><stop offset="1" stop-color="#173a74"/></linearGradient></defs>
<rect x="739.9" y="1037" width="26.4" height="19.2" rx="1.6" fill="url(#glp)"/><rect x="738" y="1055.8" width="29.6" height="1.7" rx="0.8" fill="#3a86c9"/><rect x="743.9" y="1039.9" width="13.2" height="22.9" rx="1.6" fill="url(#gph)"/><rect x="747.6" y="1041" width="5.6" height="0.9" rx="0.4" fill="#bfe9fb"/>
<circle cx="764" cy="1038.8" r="10" fill="#0a78d4"/>
<path d="M808.1 1036.3A13.4 13.4 0 1 1 801.3 1061.3L794.6 1063.4L796.7 1057A13.4 13.4 0 0 1 808.1 1036.3Z" fill="none" stroke="#1d8f48" stroke-width="3" stroke-linejoin="round"/><path d="M803.6 1043.4Q802 1044.8 802.4 1047Q803.2 1050.6 806.6 1053.4Q809.8 1056 812.8 1056Q814.8 1055.6 815.5 1053.8L815.4 1052.6L812.2 1051L810.8 1052.4Q808.6 1051.6 806.8 1049L808 1047.4L806.4 1043.6Z" fill="#1d8f48"/>
<path d="M848.3 1039.6Q848.3 1037 850.9 1037H857.4Q858.6 1037 859.4 1037.8L861.6 1040H875.5Q878.1 1040 878.1 1042.6V1046H848.3Z" fill="#e6a70c"/><rect x="848.3" y="1041.4" width="29.8" height="21.6" rx="2.2" fill="url(#gfe)"/><path d="M853.2 1063V1058.2Q853.2 1056 855.4 1056H870.8Q873 1056 873 1058.2V1063Z" fill="#1a80d6"/><rect x="857.2" y="1058.6" width="11.8" height="1.6" rx="0.8" fill="#0c57a3"/>
<path d="M910.9 1040V1038.6Q910.9 1036.9 912.6 1036.9H922.4Q924.1 1036.9 924.1 1038.6V1040" stroke="#31b6ef" stroke-width="2" fill="none"/><path d="M903 1042.2Q903 1039.7 905.5 1039.7H929.5Q932 1039.7 932 1042.2V1059.9Q932 1064.9 927 1064.9H908Q903 1064.9 903 1059.9Z" fill="url(#gst)"/><rect x="912.2" y="1047" width="5" height="5" fill="#f25022"/><rect x="918.2" y="1047" width="5" height="5" fill="#7fba00"/><rect x="912.2" y="1053" width="5" height="5" fill="#00a4ef"/><rect x="918.2" y="1053" width="5" height="5" fill="#ffb900"/>
<defs><linearGradient id="gc1" x1="0.3" y1="0" x2="0.1" y2="1"><stop offset="0" stop-color="#2566dc"/><stop offset="0.3" stop-color="#2cb0e8"/><stop offset="0.6" stop-color="#56c777"/><stop offset="0.85" stop-color="#f4d338"/><stop offset="1" stop-color="#f6a23a"/></linearGradient><linearGradient id="gc2" x1="0.7" y1="0" x2="0.2" y2="1"><stop offset="0" stop-color="#a259ec"/><stop offset="0.4" stop-color="#e868a6"/><stop offset="0.75" stop-color="#f8923e"/><stop offset="1" stop-color="#ee5636"/></linearGradient></defs>
<path d="M 979.4 1044.0 L 984.7 1044.0 Q 988.8 1044.5 987.7 1048.4 L 984.7 1060.1 Q 983.8 1063.1 980.8 1063.1 L 969.5 1063.1 Q 966.3 1062.8 967.2 1060.1 L 971.6 1046.3 Q 972.5 1044.0 975.0 1044.0 Z" fill="url(#gc2)"/><path d="M 965.4 1036.2 L 977.7 1036.2 Q 979.9 1036.5 979.2 1038.8 L 975.0 1053.7 Q 974.4 1055.7 972.3 1055.5 L 961.7 1055.5 Q 957.8 1055.0 958.8 1051.1 L 962.2 1039.0 Q 963.1 1036.2 965.4 1036.2 Z" fill="url(#gc1)"/>
<path d="M 975.0 1044.0 L 979.4 1044.0 L 975.0 1055.5 L 970.9 1055.5 Z" fill="#f3eef6" fill-opacity="0.92"/>
<rect x="1034" y="1046" width="8" height="12.6" rx="2.5" fill="#5059c9"/><circle cx="1029.3" cy="1040.5" r="4.7" fill="#7b83eb"/><path d="M1021.3 1046H1038.5V1054.2Q1038.5 1062.8 1029.9 1062.8Q1021.3 1062.8 1021.3 1054.2Z" fill="#7b83eb"/><rect x="1013.2" y="1042.8" width="14.4" height="14.4" rx="1.6" fill="#4b53bc"/>
<circle cx="1039" cy="1039" r="10" fill="#0a78d4"/>
<circle cx="1083" cy="1049.7" r="14.9" fill="#ff6c37"/><path d="M1088.4 1042.8A2.3 2.3 0 1 1 1090.6 1045L1086.6 1049.6Q1084.4 1052.8 1080.6 1054.6L1076.4 1057.2L1075.2 1057.9L1075.8 1056.6L1078.6 1052.4Q1080.6 1048.8 1083.8 1046.8Z" fill="#ffffff" fill-opacity="0.96"/>
<rect x="1123.3" y="1039.7" width="29.5" height="20.4" rx="5.4" fill="#ff0033"/><path d="M1135.4 1045.6L1142.6 1049.9L1135.4 1054.2Z" fill="#ffffff"/>
<defs><linearGradient id="geg" x1="0" y1="0.6" x2="1" y2="0.2"><stop offset="0" stop-color="#2ba4e2"/><stop offset="0.55" stop-color="#34c4a8"/><stop offset="1" stop-color="#62dc58"/></linearGradient></defs>
<circle cx="1192.9" cy="1049.6" r="15" fill="url(#ged)"/><path d="M1180.3 1041.6Q1186 1034.2 1194.6 1034.7Q1205.2 1035.8 1207.8 1046Q1208.4 1052.8 1201.6 1053.2Q1196.6 1053 1197.2 1049.6Q1198 1044.6 1191.6 1043Q1184.6 1042 1180.3 1047.4Z" fill="url(#geg)"/><path d="M1188.6 1044.6Q1184.6 1049.6 1187.2 1056Q1190.8 1063.4 1199.6 1062.6Q1204.6 1061.6 1206.8 1057.4Q1200.4 1061 1195.4 1056.8Q1190.8 1052 1193.2 1046.4Z" fill="#174f9f"/><path d="M1196.4 1052.4Q1201 1054.6 1208.8 1050.4L1208.8 1055.4Q1207.6 1057 1206.6 1057.6Q1201 1060.6 1197 1057Q1195.2 1054.8 1196.4 1052.4Z" fill="#f0e0e6"/>
<path d="M1248 1049.6L1235.01 1042.10A15 15 0 0 1 1260.99 1042.10Z" fill="#ea4335"/><path d="M1248 1049.6L1260.99 1042.10A15 15 0 0 1 1248.00 1064.60Z" fill="#fbbc04"/><path d="M1248 1049.6L1248.00 1064.60A15 15 0 0 1 1235.01 1042.10Z" fill="#34a853"/><circle cx="1248" cy="1049.6" r="6.90" fill="#ffffff"/><circle cx="1248" cy="1049.6" r="5.40" fill="#4285f4"/>
<g transform="translate(1287.50,1035.00) scale(1.5)" ><path d="M14.6 0.4 L19.6 2.6 V17.4 L14.6 19.6 Z" fill="#2aa5f4" /><path d="M14.8 3.2 L1.6 13.6" stroke="#0b80d0" stroke-width="3.2" fill="none" stroke-linecap="round"/><path d="M14.8 16.8 L1.6 6.4" stroke="#0a6fc2" stroke-width="3.2" fill="none" stroke-linecap="round"/><path d="M14.4 0.3 L19.7 2.7 V17.3 L14.4 19.7 Z" fill="#2ba6f3" /></g>
<path d="M1347 1044.6L1359.9 1037.2L1372.8 1044.6V1051H1347Z" fill="#1b88de"/><path d="M1359.9 1037.2L1372.8 1044.6V1050L1355.4 1039.8Z" fill="#0a4fa3"/><path d="M1355.4 1039.8L1372.8 1050V1053L1351.6 1042Z" fill="#0f6cbd"/><path d="M1347 1049.4L1372.8 1052V1060Q1372.8 1062.5 1370.3 1062.5H1349.5Q1347 1062.5 1347 1060Z" fill="url(#gol2)"/><defs><linearGradient id="gol2" x1="0" y1="0" x2="1" y2="1"><stop offset="0" stop-color="#1fa0ea"/><stop offset="1" stop-color="#56dafc"/></linearGradient></defs><rect x="1343" y="1042.9" width="15.2" height="15.2" rx="2" fill="#0f6cbd"/>
<path d="M1412.9 1050.5L1399.91 1043.00A15 15 0 0 1 1425.89 1043.00Z" fill="#ea4335"/><path d="M1412.9 1050.5L1425.89 1043.00A15 15 0 0 1 1412.90 1065.50Z" fill="#fbbc04"/><path d="M1412.9 1050.5L1412.90 1065.50A15 15 0 0 1 1399.91 1043.00Z" fill="#34a853"/><circle cx="1412.9" cy="1050.5" r="6.90" fill="#ffffff"/><circle cx="1412.9" cy="1050.5" r="5.40" fill="#4285f4"/>
<clipPath id="cav"><circle cx="1424.1" cy="1038.9" r="10"/></clipPath><g clip-path="url(#cav)"><rect x="1414" y="1028" width="21" height="22" fill="#7d9a58"/><path d="M1414 1040L1420 1030L1428 1028L1434 1034V1028H1414Z" fill="#5d7d3e"/><path d="M1421.5 1049Q1422 1039.5 1428 1037Q1434.5 1036 1435 1049Z" fill="#f4f2f0"/><ellipse cx="1420.6" cy="1036.6" rx="3.6" ry="4.2" fill="#c49a80"/><rect x="1417.4" y="1034.8" width="6.6" height="2.2" rx="1" fill="#3a2a28"/><path d="M1417 1034Q1420.5 1030.2 1424.2 1033.6L1424 1035.2H1417.2Z" fill="#2c211e"/></g>
<path d="M1626.6 1053.6L1633.3 1046.9L1640 1053.6" stroke="#1b1b1b" stroke-width="1.7" fill="none"/>
<path d="M1718.6 1047.2A13.6 13.6 0 0 1 1737.6 1047.2" stroke="#1b1b1b" stroke-width="1.6" fill="none"/><path d="M1721.8 1050.6A9 9 0 0 1 1734.4 1050.6" stroke="#1b1b1b" stroke-width="1.6" fill="none"/><path d="M1724.8 1053.6A4.8 4.8 0 0 1 1731.4 1053.6" stroke="#1b1b1b" stroke-width="1.6" fill="none"/><circle cx="1728.1" cy="1056" r="1.5" fill="#1b1b1b"/>
<path d="M1748.6 1047H1751.8L1756.4 1043V1058L1751.8 1054H1748.6Z" stroke="#1b1b1b" stroke-width="1.4" fill="none" stroke-linejoin="round"/><path d="M1759.4 1047.2Q1761.4 1050.5 1759.4 1053.8" stroke="#1b1b1b" stroke-width="1.3" fill="none"/><path d="M1762.4 1044.8Q1765.8 1050.5 1762.4 1056.2" stroke="#8e8684" stroke-width="1.3" fill="none"/><path d="M1765.4 1042.6Q1770 1050.5 1765.4 1058.4" stroke="#c4bab6" stroke-width="1.3" fill="none"/>
<rect x="1778.6" y="1044.6" width="16.4" height="11.4" rx="2.6" stroke="#1b1b1b" stroke-width="1.4" fill="none"/><rect x="1781" y="1047" width="5.6" height="6.6" rx="0.8" fill="#1b1b1b"/><path d="M1796.6 1048.4V1052.2" stroke="#1b1b1b" stroke-width="2" stroke-linecap="round"/>
</svg>
<span style="left:54.3px;top:13.03px;font-size:15.5px;line-height:20px;color:#cccccc;letter-spacing:-0.471px;">File</span>
<span style="left:98.2px;top:13.03px;font-size:15.5px;line-height:20px;color:#cccccc;letter-spacing:0.020px;">Edit</span>
<span style="left:145px;top:13.03px;font-size:15.5px;line-height:20px;color:#cccccc;letter-spacing:0.137px;">Selection</span>
<span style="left:230px;top:13.03px;font-size:15.5px;line-height:20px;color:#cccccc;letter-spacing:0.243px;">View</span>
<span style="left:284.5px;top:13.03px;font-size:15.5px;line-height:20px;color:#cccccc;letter-spacing:-0.094px;">Go</span>
<span style="left:325.7px;top:13.03px;font-size:15.5px;line-height:20px;color:#cccccc;letter-spacing:-0.279px;">Run</span>
<span style="left:373.3px;top:13.03px;font-size:15.5px;line-height:20px;color:#cccccc;letter-spacing:0.178px;">Terminal</span>
<span style="left:454px;top:13.03px;font-size:15.5px;line-height:20px;color:#cccccc;letter-spacing:0.202px;">Help</span>
<span style="left:912.3px;top:12.68px;font-size:14.5px;line-height:19px;color:#cccccc;letter-spacing:0.205px;">provider_new project</span>
<span style="left:85.4px;top:56.65px;font-size:14px;line-height:18px;color:#cccccc;letter-spacing:-1.781px;">EXPLORER</span>
<span style="left:85.4px;top:93.35px;font-size:14px;line-height:18px;color:#cccccc;font-weight:700;letter-spacing:-0.572px;">PROVIDER_NEW PR...</span>
<span style="left:85.2px;top:943.45px;font-size:14px;line-height:18px;color:#cccccc;font-weight:700;letter-spacing:-0.493px;">OUTLINE</span>
<span style="left:85.2px;top:971.45px;font-size:14px;line-height:18px;color:#cccccc;font-weight:700;letter-spacing:-0.418px;">TIMELINE</span>
<span style="left:130.3px;top:119.83px;font-size:15.5px;line-height:20px;color:#cccccc;letter-spacing:0.236px;">.dart_tool</span>
<span style="left:130.3px;top:147.33px;font-size:15.5px;line-height:20px;color:#cccccc;letter-spacing:-0.125px;">.idea</span>
<span style="left:130.3px;top:174.83px;font-size:15.5px;line-height:20px;color:#cccccc;letter-spacing:0.469px;">android</span>
<span style="left:140.3px;top:202.33px;font-size:15.5px;line-height:20px;color:#cccccc;letter-spacing:0.142px;">.gradle</span>
<span style="left:140.3px;top:229.83px;font-size:15.5px;line-height:20px;color:#cccccc;letter-spacing:0.357px;">.kotlin</span>
<span style="left:140.3px;top:257.33px;font-size:15.5px;line-height:20px;color:#cccccc;letter-spacing:0.175px;">app</span>
<span style="left:150.3px;top:284.83px;font-size:15.5px;line-height:20px;color:#cccccc;letter-spacing:-0.541px;">.cxx</span>
<span style="left:150.3px;top:312.33px;font-size:15.5px;line-height:20px;color:#cccccc;letter-spacing:-0.324px;">src</span>
<span style="left:150.3px;top:339.83px;font-size:15.5px;line-height:20px;color:#cccccc;letter-spacing:0.379px;">build.gradle</span>
<span style="left:150.3px;top:367.33px;font-size:15.5px;line-height:20px;color:#cccccc;letter-spacing:0.185px;">google-services.json</span>
<span style="left:150.3px;top:394.83px;font-size:15.5px;line-height:20px;color:#cccccc;letter-spacing:0.399px;">proguard-rules.pro</span>
<span style="left:150.3px;top:422.33px;font-size:15.5px;line-height:20px;color:#cccccc;letter-spacing:0.255px;">upload-keystore.jks</span>
<span style="left:140.3px;top:449.83px;font-size:15.5px;line-height:20px;color:#cccccc;letter-spacing:0.268px;">gradle</span>
<span style="left:140.3px;top:477.33px;font-size:15.5px;line-height:20px;color:#cccccc;letter-spacing:0.379px;">build.gradle</span>
<span style="left:140.3px;top:504.83px;font-size:15.5px;line-height:20px;color:#cccccc;letter-spacing:0.316px;">gradle.properties</span>
<span style="left:140.3px;top:532.33px;font-size:15.5px;line-height:20px;color:#cccccc;letter-spacing:0.303px;">gradlew</span>
<span style="left:140.3px;top:559.83px;font-size:15.5px;line-height:20px;color:#cccccc;letter-spacing:0.338px;">gradlew.bat</span>
<span style="left:140.3px;top:587.33px;font-size:15.5px;line-height:20px;color:#ffffff;letter-spacing:0.300px;">key.properties</span>
<span style="left:140.3px;top:614.83px;font-size:15.5px;line-height:20px;color:#cccccc;letter-spacing:0.243px;">local.properties</span>
<span style="left:140.3px;top:642.33px;font-size:15.5px;line-height:20px;color:#cccccc;letter-spacing:0.212px;">settings.gradle</span>
<span style="left:130.3px;top:669.83px;font-size:15.5px;line-height:20px;color:#cccccc;letter-spacing:-0.435px;">assets</span>
<span style="left:130.3px;top:697.33px;font-size:15.5px;line-height:20px;color:#cccccc;letter-spacing:0.550px;">build</span>
<span style="left:130.3px;top:724.83px;font-size:15.5px;line-height:20px;color:#cccccc;letter-spacing:0.057px;">ios</span>
<span style="left:130.3px;top:752.33px;font-size:15.5px;line-height:20px;color:#cca700;letter-spacing:0.328px;">lib</span>
<span style="left:140.3px;top:779.83px;font-size:15.5px;line-height:20px;color:#cca700;letter-spacing:0.307px;">auth</span>
<span style="left:150.3px;top:807.33px;font-size:15.5px;line-height:20px;color:#cccccc;letter-spacing:0.577px;">component</span>
<span style="left:150.3px;top:834.83px;font-size:15.5px;line-height:20px;color:#cccccc;letter-spacing:-0.093px;">change_password_screen.d...</span>
<span style="left:150.3px;top:862.33px;font-size:15.5px;line-height:20px;color:#cca700;letter-spacing:0.142px;">edit_profile_screen.dart</span>
<span style="left:150.3px;top:889.83px;font-size:15.5px;line-height:20px;color:#cccccc;letter-spacing:0.292px;">forgot_password_dialog.dart</span>
<span style="left:150.3px;top:917.33px;font-size:15.5px;line-height:20px;color:#cccccc;letter-spacing:-0.046px;">sign_in_screen.dart</span>
<span style="left:331.3px;top:862.50px;font-size:15px;line-height:20px;color:#cca700;letter-spacing:-2.544px;">1</span>
<span style="left:399.5px;top:56.63px;font-size:15.5px;line-height:20px;color:#cca700;letter-spacing:0.231px;">main.dart</span>
<span style="left:473px;top:56.63px;font-size:15.5px;line-height:20px;color:#cca700;letter-spacing:-0.825px;">2</span>
<span style="left:557px;top:56.63px;font-size:15.5px;line-height:20px;color:#9d9d9d;letter-spacing:-0.070px;">splash_screen.dart</span>
<span style="left:763.3px;top:56.63px;font-size:15.5px;line-height:20px;color:#9d9d9d;letter-spacing:0.287px;">upload-keystore.jks</span>
<span style="left:979px;top:56.63px;font-size:15.5px;line-height:20px;color:#9d9d9d;letter-spacing:0.345px;">build.gradle</span>
<span style="left:1139.3px;top:56.63px;font-size:15.5px;line-height:20px;color:#9d9d9d;letter-spacing:0.287px;">local.properties</span>
<span style="left:1326px;top:56.63px;font-size:15.5px;line-height:20px;color:#ffffff;letter-spacing:0.343px;">key.properties</span>
<span style="left:1503.3px;top:56.63px;font-size:15.5px;line-height:20px;color:#cca700;letter-spacing:0.125px;">edit_profile_screen.dart</span>
<span style="left:1675px;top:56.63px;font-size:15.5px;line-height:20px;color:#cca700;letter-spacing:-1.625px;">1</span>
<span style="left:1757.3px;top:56.63px;font-size:15.5px;line-height:20px;color:#9d9d9d;letter-spacing:0.109px;">handyman_</span>
<span style="left:378.75px;top:92.33px;font-size:15.5px;line-height:20px;color:#a9a9a9;letter-spacing:0.469px;">android</span>
<span style="left:482.5px;top:92.33px;font-size:15.5px;line-height:20px;color:#a9a9a9;letter-spacing:0.307px;">key.properties</span>
<span class="m" style="left:402px;top:117.05px;font-size:16.7px;line-height:22px;color:#6e7681;letter-spacing:-0.391px;">1</span>
<span class="m" style="left:444px;top:117.05px;font-size:16.7px;line-height:22px;color:#569cd6;letter-spacing:-0.389px;">storePassword</span>
<span class="m" style="left:569.125px;top:117.05px;font-size:16.7px;line-height:22px;color:#d4d4d4;letter-spacing:-0.389px;">=Eatfish7488</span>
<span class="m" style="left:402px;top:140.80px;font-size:16.7px;line-height:22px;color:#6e7681;letter-spacing:-0.391px;">2</span>
<span class="m" style="left:444px;top:140.80px;font-size:16.7px;line-height:22px;color:#569cd6;letter-spacing:-0.389px;">keyPassword</span>
<span class="m" style="left:549.875px;top:140.80px;font-size:16.7px;line-height:22px;color:#d4d4d4;letter-spacing:-0.389px;">=Eatfish7488</span>
<span class="m" style="left:402px;top:164.55px;font-size:16.7px;line-height:22px;color:#6e7681;letter-spacing:-0.391px;">3</span>
<span class="m" style="left:444px;top:164.55px;font-size:16.7px;line-height:22px;color:#569cd6;letter-spacing:-0.391px;">keyAlias</span>
<span class="m" style="left:521.0px;top:164.55px;font-size:16.7px;line-height:22px;color:#d4d4d4;letter-spacing:-0.391px;">=upload</span>
<span class="m" style="left:402px;top:188.30px;font-size:16.7px;line-height:22px;color:#6e7681;letter-spacing:-0.391px;">4</span>
<span class="m" style="left:444px;top:188.30px;font-size:16.7px;line-height:22px;color:#569cd6;letter-spacing:-0.391px;">storeFile</span>
<span class="m" style="left:530.625px;top:188.30px;font-size:16.7px;line-height:22px;color:#d4d4d4;letter-spacing:-0.389px;">=app/upload-keystore.jks</span>
<span class="m" style="left:402px;top:212.05px;font-size:16.7px;line-height:22px;color:#cccccc;letter-spacing:-0.391px;">5</span>
<span style="left:384.4px;top:640.65px;font-size:14px;line-height:18px;color:#9d9d9d;letter-spacing:-1.452px;">PROBLEMS</span>
<span style="left:460.5px;top:642.04px;font-size:12px;line-height:16px;color:#ffffff;letter-spacing:1.320px;">77</span>
<span style="left:509.4px;top:640.65px;font-size:14px;line-height:18px;color:#9d9d9d;letter-spacing:-1.060px;">OUTPUT</span>
<span style="left:591.2px;top:640.65px;font-size:14px;line-height:18px;color:#9d9d9d;letter-spacing:-1.188px;">DEBUG CONSOLE</span>
<span style="left:727.8px;top:640.65px;font-size:14px;line-height:18px;color:#cccccc;letter-spacing:-0.898px;">GITHUB</span>
<span style="left:440px;top:676.35px;font-size:14px;line-height:18px;color:#cccccc;font-weight:700;letter-spacing:-0.454px;">TERMINAL</span>
<span class="m" style="left:440px;top:710.87px;font-size:15.5px;line-height:20px;color:#e5504f;letter-spacing:-0.302px;">FAILURE: Build failed with an exception.</span>
<span class="m" style="left:440px;top:754.87px;font-size:15.5px;line-height:20px;color:#e5504f;letter-spacing:-0.302px;">* What went wrong:</span>
<span class="m" style="left:440px;top:776.87px;font-size:15.5px;line-height:20px;color:#e5504f;letter-spacing:-0.302px;">Execution failed for task &#x27;:app:validateSigningRelease&#x27;.</span>
<span class="m" style="left:440px;top:798.87px;font-size:15.5px;line-height:20px;color:#e5504f;letter-spacing:-0.302px;">&gt; Keystore file &#x27;F:\Eatfish\provider_new project\android\app\app\upload-keystore.jks&#x27; not found for signing config &#x27;release&#x27;.</span>
<span class="m" style="left:440px;top:842.87px;font-size:15.5px;line-height:20px;color:#e5504f;letter-spacing:-0.302px;">* Try:</span>
<span class="m" style="left:440px;top:864.87px;font-size:15.5px;line-height:20px;color:#e5504f;letter-spacing:-0.302px;">&gt; Run with --stacktrace option to get the stack trace.</span>
<span class="m" style="left:440px;top:886.87px;font-size:15.5px;line-height:20px;color:#e5504f;letter-spacing:-0.302px;">&gt; Run with --info or --debug option to get more log output.</span>
<span class="m" style="left:440px;top:908.87px;font-size:15.5px;line-height:20px;color:#e5504f;letter-spacing:-0.302px;">&gt; Run with --scan to get full insights.</span>
<span class="m" style="left:440px;top:930.87px;font-size:15.5px;line-height:20px;color:#e5504f;letter-spacing:-0.302px;">&gt; Get more help at https</span>
<span class="m" style="left:656.0px;top:930.87px;font-size:15.5px;line-height:20px;color:#e5504f;letter-spacing:-0.302px;">://help.gradle.org.</span>
<span class="m" style="left:440px;top:974.87px;font-size:15.5px;line-height:20px;color:#e5504f;letter-spacing:-0.302px;">BUILD FAILED in 8m 33s</span>
<span style="left:1554px;top:914.49px;font-size:26px;line-height:34px;color:#6f6f6f;letter-spacing:-0.543px;">Activate Windows</span>
<span style="left:1554.2px;top:949.26px;font-size:18.6px;line-height:24px;color:#727272;letter-spacing:-0.289px;">Go to Settings to activate Windows.</span>
<span style="left:73.75px;top:996.30px;font-size:15px;line-height:20px;color:#cccccc;letter-spacing:-0.044px;">0</span>
<span style="left:108px;top:996.30px;font-size:15px;line-height:20px;color:#cccccc;letter-spacing:-0.444px;">29</span>
<span style="left:150px;top:996.30px;font-size:15px;line-height:20px;color:#cccccc;letter-spacing:-0.544px;">48</span>
<span style="left:1270.6px;top:996.80px;font-size:15px;line-height:20px;color:#cccccc;letter-spacing:-0.413px;">Ln 5, Col 1</span>
<span style="left:1359.2px;top:996.80px;font-size:15px;line-height:20px;color:#cccccc;letter-spacing:-0.602px;">Spaces: 4</span>
<span style="left:1440.6px;top:996.80px;font-size:15px;line-height:20px;color:#cccccc;letter-spacing:-0.640px;">UTF-8</span>
<span style="left:1499.5px;top:996.80px;font-size:15px;line-height:20px;color:#cccccc;letter-spacing:-1.518px;">CRLF</span>
<span style="left:1554.8px;top:997.48px;font-size:14.5px;line-height:19px;color:#cccccc;letter-spacing:2.556px;">{}</span>
<span style="left:1578.1px;top:996.80px;font-size:15px;line-height:20px;color:#cccccc;letter-spacing:-0.178px;">Properties</span>
<span style="left:1702.6px;top:996.80px;font-size:15px;line-height:20px;color:#cccccc;letter-spacing:-0.090px;">Chrome (web-javascript)</span>
<span style="left:37.2px;top:905.92px;font-size:11.5px;line-height:15px;color:#ffffff;font-weight:700;letter-spacing:-0.806px;">1</span>
<span style="left:44.7px;top:1028.80px;font-size:13px;line-height:17px;color:#ffffff;font-weight:700;letter-spacing:0.366px;">8</span>
<span style="left:64.5px;top:1030.03px;font-size:15.2px;line-height:20px;color:#1b1b1b;letter-spacing:-0.859px;">27°C</span>
<span style="left:64.5px;top:1049.93px;font-size:15.2px;line-height:20px;color:#5c5c5c;letter-spacing:0.114px;">Mostly cloudy</span>
<span style="left:594.5px;top:1040.99px;font-size:15.6px;line-height:20px;color:#1b1b1b;letter-spacing:-0.937px;">Search</span>
<span style="left:760.2px;top:1029.92px;font-size:13.5px;line-height:18px;color:#ffffff;letter-spacing:0.084px;">2</span>
<span style="left:1016.6px;top:1043.12px;font-size:11.5px;line-height:15px;color:#ffffff;font-weight:700;letter-spacing:0.369px;">T</span>
<span style="left:1036.4px;top:1030.12px;font-size:13.5px;line-height:18px;color:#ffffff;letter-spacing:-2.116px;">1</span>
<span style="left:1345.8px;top:1043.27px;font-size:12.5px;line-height:16px;color:#ffffff;font-weight:700;letter-spacing:-0.134px;">O</span>
<span style="left:1666.5px;top:1031.64px;font-size:14.6px;line-height:19px;color:#1b1b1b;letter-spacing:-0.875px;">ENG</span>
<span style="left:1673.5px;top:1051.64px;font-size:14.6px;line-height:19px;color:#1b1b1b;letter-spacing:0.203px;">IN</span>
<span style="left:1860.3px;top:1030.84px;font-size:14.6px;line-height:19px;color:#1b1b1b;letter-spacing:-0.286px;">19:34</span>
<span style="left:1818.8px;top:1051.04px;font-size:14.6px;line-height:19px;color:#1b1b1b;letter-spacing:0.194px;">26-05-2025</span>
</div></body></html>
